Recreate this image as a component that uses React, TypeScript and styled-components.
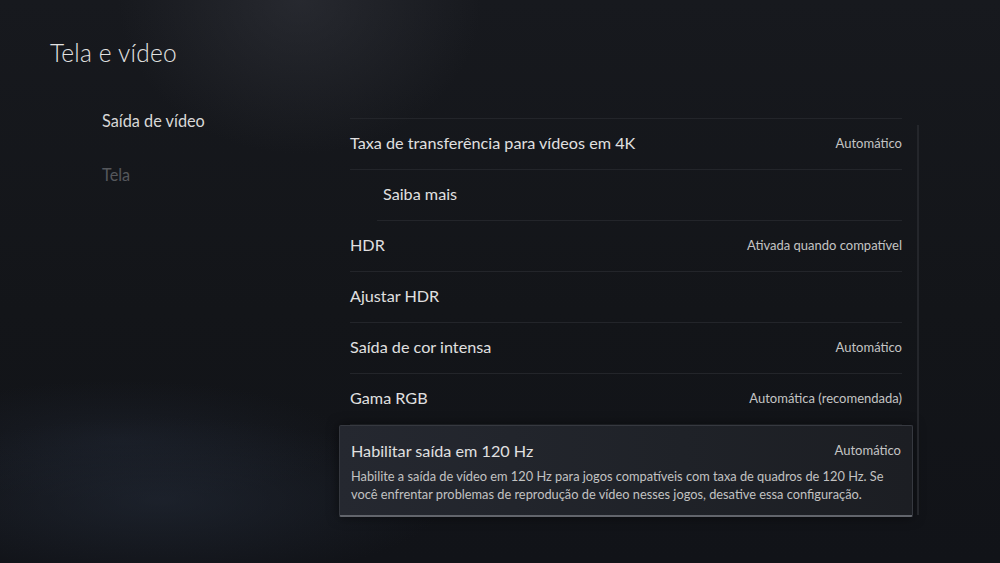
import React from "react";
import styled, { createGlobalStyle } from "styled-components";

const GlobalStyle = createGlobalStyle`
    html, body {
        margin: 0;
        padding: 0;
        background: #121419;
    }
    body {
        font-family: Lato, "Open Sans", sans-serif;
        -webkit-font-smoothing: antialiased;
    }
`;

const Page = styled.div`
    position: relative;
    width: 1000px;
    height: 563px;
    overflow: hidden;
    background:
        radial-gradient(ellipse 260px 220px at 300px 0px, rgba(58, 60, 68, 0.45), transparent 70%),
        radial-gradient(ellipse 380px 110px at 160px 500px, rgba(36, 44, 58, 0.55), transparent 75%),
        radial-gradient(ellipse 300px 80px at 120px 440px, rgba(30, 36, 48, 0.5), transparent 75%),
        linear-gradient(180deg, #17191e 0%, #131519 55%, #111318 100%);
    color: #e4e4e4;
`;

const Header = styled.header`
    height: 108px;
    padding: 37px 0 0 50px;
    box-sizing: border-box;
`;

const Title = styled.h1`
    margin: 0;
    font-size: 24.5px;
    line-height: 32px;
    font-weight: 300;
    color: #e2e2e2;
    letter-spacing: 0.2px;
`;

const Main = styled.div`
    display: flex;
    align-items: flex-start;
    padding-left: 50px;
`;

const Nav = styled.nav`
    width: 289px;
    padding-left: 52px;
    box-sizing: border-box;
    display: flex;
    flex-direction: column;
    gap: 28px;
`;

const NavItem = styled.div<{ $active?: boolean }>`
    font-size: 16.3px;
    line-height: 26px;
    font-weight: 400;
    color: ${(p) => (p.$active ? "#d8d8d8" : "#55575c")};
`;

const ListWrap = styled.div`
    display: flex;
    align-items: flex-start;
    gap: 4px;
`;

const List = styled.div`
    width: 574px;
    padding-top: 10px;
`;

const TopRule = styled.div`
    margin: 0 11px;
    border-top: 1px solid #23252a;
`;

const Row = styled.div<{ $indent?: boolean }>`
    display: flex;
    align-items: center;
    justify-content: space-between;
    box-sizing: border-box;
    height: 51px;
    padding-bottom: 3px;
    margin: 0 11px 0 ${(p) => (p.$indent ? "38px" : "11px")};
    padding-left: ${(p) => (p.$indent ? "6px" : "0")};
    border-bottom: 1px solid #23252a;
`;

const Label = styled.span`
    font-size: 16.2px;
    font-weight: 400;
    color: #e0e0e0;
`;

const Value = styled.span`
    font-size: 13px;
    font-weight: 400;
    color: #c4c4c4;
`;

const Selected = styled.div`
    box-sizing: border-box;
    height: 92px;
    padding: 11px 11px 0;
    border: 1px solid #363940;
    border-bottom: 2px solid #62656c;
    border-radius: 2px;
    background: linear-gradient(90deg, #252830 0%, #1f2228 60%, #1c1e23 100%);
    box-shadow: 0 0 12px rgba(0, 0, 0, 0.5);
`;

const SelectedHead = styled.div`
    display: flex;
    align-items: center;
    justify-content: space-between;
    height: 26px;
`;

const Description = styled.p`
    margin: 4px 0 0;
    font-size: 12.8px;
    line-height: 18px;
    color: #c2c2c2;
`;

const ScrollTrack = styled.div`
    width: 2px;
    height: 390px;
    margin-top: 17px;
    background: #24262b;
`;

type Setting = { label: string; value?: string; indent?: boolean };

const settings: Setting[] = [
    { label: "Taxa de transferência para vídeos em 4K", value: "Automático" },
    { label: "Saiba mais", indent: true },
    { label: "HDR", value: "Ativada quando compatível" },
    { label: "Ajustar HDR" },
    { label: "Saída de cor intensa", value: "Automático" },
    { label: "Gama RGB", value: "Automática (recomendada)" },
];

export default function App() {
    return (
        <Page>
            <GlobalStyle />
            <Header>
                <Title>Tela e vídeo</Title>
            </Header>
            <Main>
                <Nav>
                    <NavItem $active>Saída de vídeo</NavItem>
                    <NavItem>Tela</NavItem>
                </Nav>
                <ListWrap>
                    <List>
                        <TopRule />
                        {settings.map((s) => (
                            <Row key={s.label} $indent={s.indent}>
                                <Label>{s.label}</Label>
                                {s.value && <Value>{s.value}</Value>}
                            </Row>
                        ))}
                        <Selected>
                            <SelectedHead>
                                <Label>Habilitar saída em 120 Hz</Label>
                                <Value>Automático</Value>
                            </SelectedHead>
                            <Description>
                                Habilite a saída de vídeo em 120 Hz para jogos compatíveis com taxa de quadros de 120 Hz. Se
                                você enfrentar problemas de reprodução de vídeo nesses jogos, desative essa configuração.
                            </Description>
                        </Selected>
                    </List>
                    <ScrollTrack />
                </ListWrap>
            </Main>
        </Page>
    );
}
